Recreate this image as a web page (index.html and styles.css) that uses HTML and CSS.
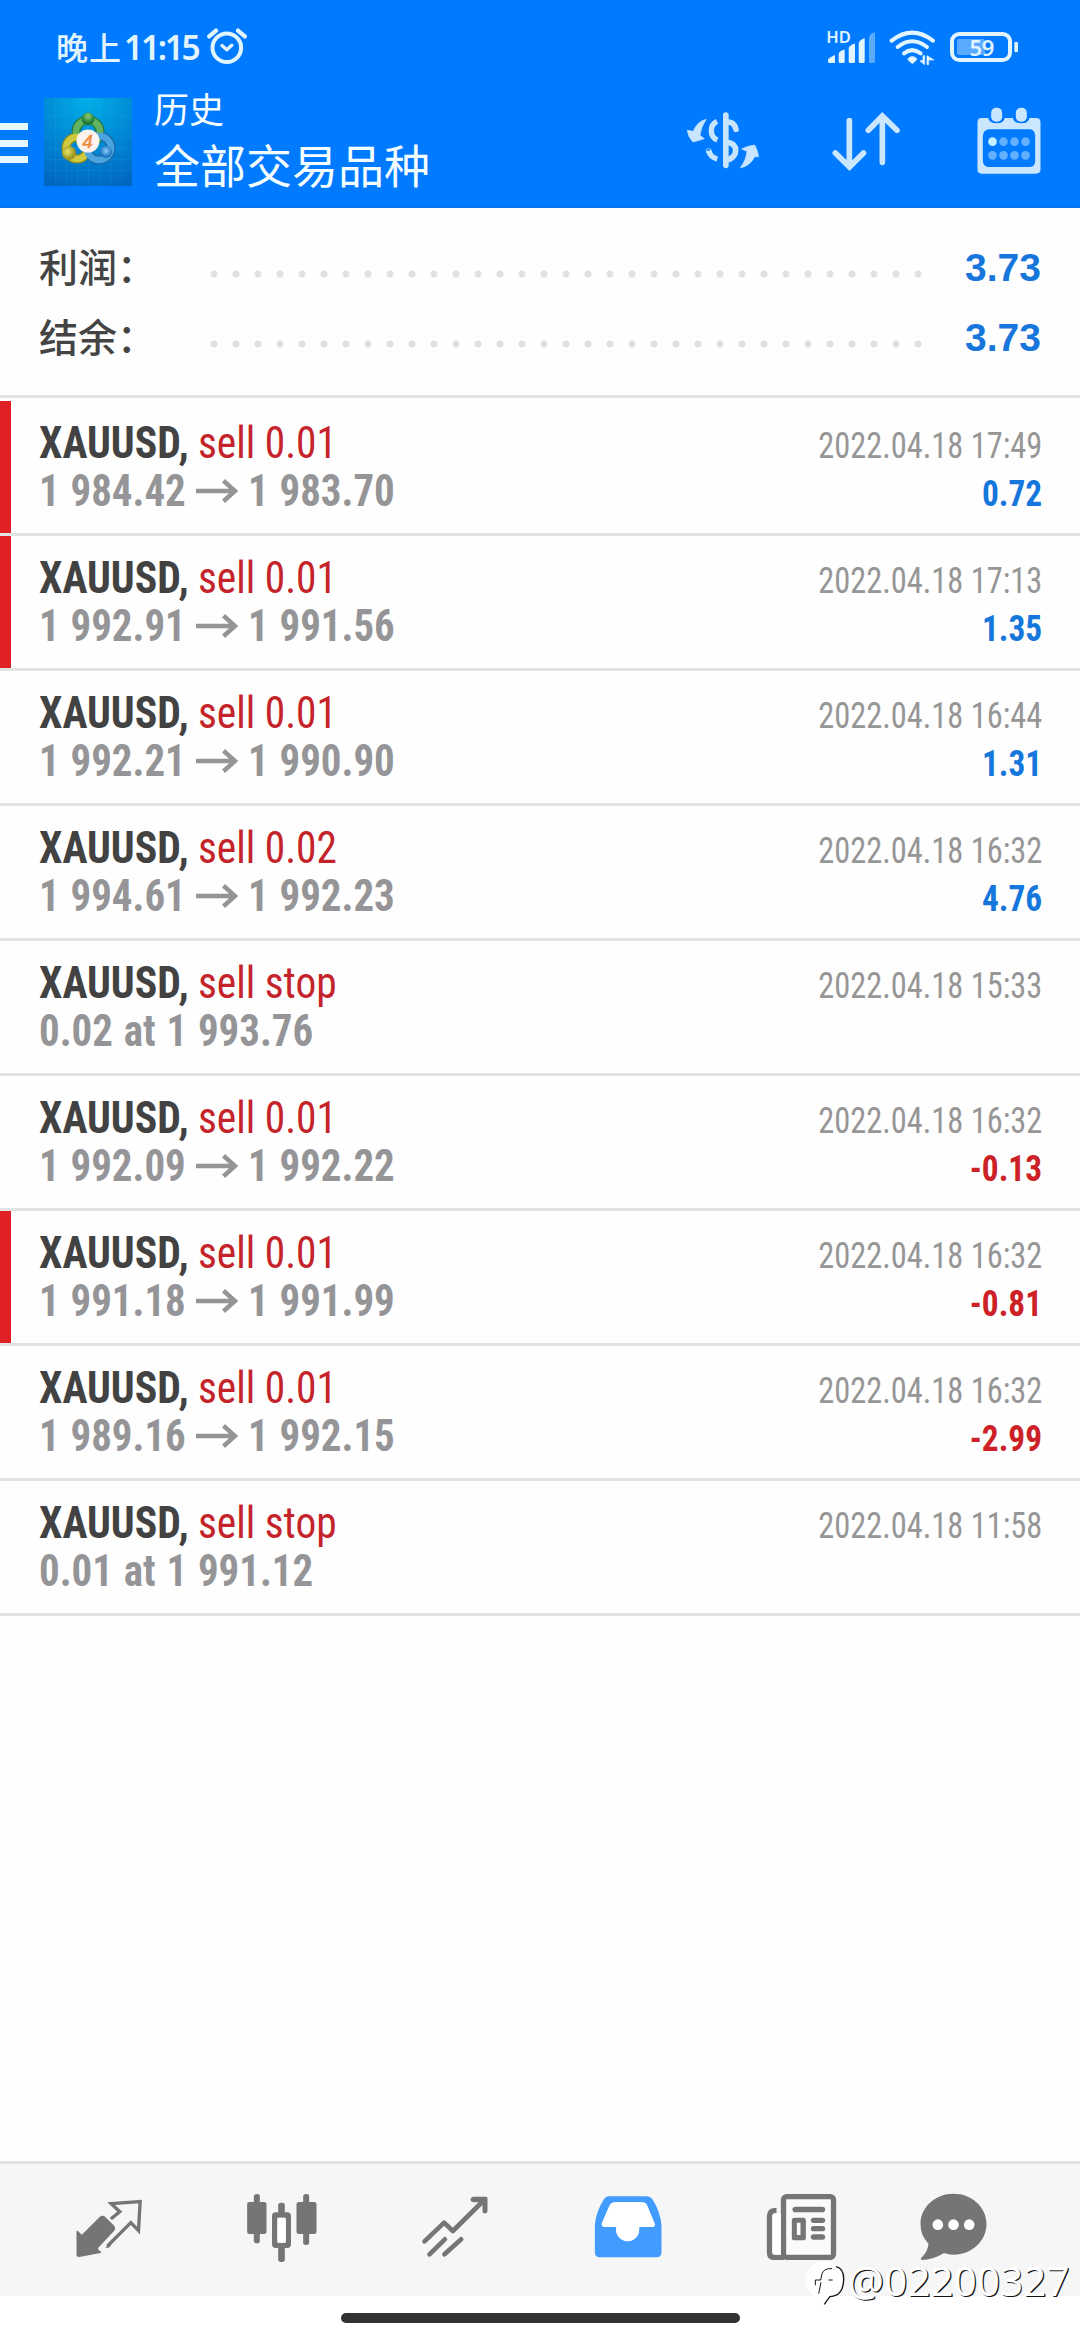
FILE: index.html
```html
<!DOCTYPE html>
<html lang="zh-CN">
<head>
<meta charset="utf-8">
<title>历史</title>
<link rel="stylesheet" href="styles.css">
</head>
<body>
<header class="header">
  <div class="status">
    <div class="status-left">
      <span class="clock-cjk">晚上</span><span class="clock">11:15</span>
      <svg class="alarm" viewBox="0 0 40 38"><g fill="none" stroke="#e2f5ff" stroke-linecap="round" stroke-linejoin="round"><circle cx="19.8" cy="20.8" r="14.3" stroke-width="4"/><path d="M2.2 9.4 9 3.6M31 3.6l6.800 5.800" stroke-width="4.200"/><path d="M15 18.500l4.800 4.200 5-4.500" stroke-width="3.400"/></g></svg>
    </div>
    <div class="status-right">
      <div class="signal"><span class="hd">HD</span>
        <svg class="bars" viewBox="0 0 50 34"><g fill="#e2f5ff"><path d="M2 29q0-2 7-5v8H3.500Q2 32 2 30.500z"/><path d="M12.700 22.500q1-3 6-4V30.500q0 1.500-1.500 1.500h-3q-1.500 0-1.500-1.500z"/><path d="M22.700 17q1-3 6.300-4.500V30.500q0 1.500-1.500 1.500h-3.300q-1.500 0-1.500-1.500z"/><path d="M32.700 12q1-3 6-5V30.500q0 1.500-1.500 1.500h-3q-1.500 0-1.500-1.500z"/><path opacity=".4" d="M43 6q1-3.500 6-5V30.500q0 1.500-1.500 1.500h-3Q43 32 43 30.500z"/></g></svg>
      </div>
      <svg class="wifi" viewBox="680 85 150 115"><g fill="none" stroke="#e2f5ff" stroke-width="12" stroke-linecap="round"><path d="M691 123Q752 75 815 123"/><path d="M709 142Q752 108 797 142"/><path d="M728 161Q752 142 778 161"/></g><path fill="#e2f5ff" d="M739 178q14-15 28 0-4 8-14 14-10-6-14-14zM776 184l14 11V168h-5v14zM797 168v27h5v-14h16z" stroke="#e2f5ff" stroke-width="2"/></svg>
      <svg class="battery" viewBox="864 90 212 102"><rect x="873" y="102" width="174" height="78" rx="22" fill="none" stroke="#e2f5ff" stroke-width="12"/><rect x="888" y="117" width="84" height="48" rx="6" fill="#e2f5ff" opacity=".4"/><rect x="1060" y="125" width="11" height="32" rx="5" fill="#e2f5ff"/><text x="962" y="167" text-anchor="middle" class="level">59</text></svg>
    </div>
  </div>
  <div class="appbar">
    <div class="menu"><i></i><i></i><i></i></div>
    <svg class="logo" viewBox="0 0 88 88">
      <defs>
        <radialGradient id="sky" cx=".5" cy="0" r="1.1"><stop offset="0" stop-color="#00b0e8"/><stop offset=".5" stop-color="#0088d4"/><stop offset="1" stop-color="#0064bc"/></radialGradient>
        <radialGradient id="gn" cx=".5" cy=".3"><stop offset="0" stop-color="#8fd07a"/><stop offset="1" stop-color="#1e7c34"/></radialGradient>
        <radialGradient id="ye" cx=".4" cy=".4"><stop offset="0" stop-color="#eee66a"/><stop offset="1" stop-color="#9c961f"/></radialGradient>
        <radialGradient id="bl" cx=".5" cy=".4"><stop offset="0" stop-color="#8fd0ff"/><stop offset="1" stop-color="#1874bd"/></radialGradient>
      </defs>
      <rect width="88" height="88" fill="url(#sky)"/>
      <path d="M11.500 0v88M22.500 0v88M33.500 0v88M44.500 0v88M55.500 0v88M66.500 0v88M77.500 0v88M0 17.500h88M0 28.500h88M0 39.500h88M0 50.500h88M0 61.500h88M0 72.500h88" stroke="#38b4ee" stroke-opacity=".14"/>
      <g fill="none" stroke-width="9"><circle cx="44" cy="34" r="12" stroke="#2a7a3c"/><circle cx="33" cy="50" r="11" stroke="#8d8c20"/><circle cx="55" cy="50" r="12" stroke="#1b68a8"/></g>
      <g fill="none" stroke-width="6.500"><circle cx="44" cy="34" r="12" stroke="#62b362"/><circle cx="33" cy="50" r="11" stroke="#d0c83e"/><circle cx="55" cy="50" r="12" stroke="#4ba3df"/></g>
      <circle cx="44" cy="21" r="6.500" fill="url(#gn)"/><circle cx="25" cy="55" r="7" fill="url(#ye)"/><circle cx="62" cy="54" r="6" fill="url(#bl)"/>
      <circle cx="44" cy="43" r="11.500" fill="#fbf3ee"/><text x="43.500" y="50" text-anchor="middle" class="four">4</text>
    </svg>
    <div class="titles"><div class="title">历史</div><div class="subtitle">全部交易品种</div></div>
    <div class="actions">
      <svg viewBox="6 0 240 240"><g fill="none" stroke="#c8e5ff"><path d="M134.500 45v151" stroke-width="17" stroke-linecap="round"/><path d="M108 64Q91 72 91 92T109 120" stroke-width="16"/><path d="M142 66Q160 67 165 88" stroke-width="17" stroke-linecap="round"/><path d="M83 152Q88 172 109 177" stroke-width="16" stroke-linecap="butt"/><circle cx="83" cy="153" r="1" stroke-width="15"/><path d="M140 127Q165 132 164 152T140 180" stroke-width="17"/></g><g fill="#c8e5ff" stroke="#c8e5ff" stroke-width="2"><path d="M76 58Q48 64 37 94L19 91Q21 111 36 126 53 122 70 116L57 106Q60 80 76 58z"/><path d="M178 203Q207 199 221 170L233 170Q230 150 221 135 198 138 182 147L198 154Q195 182 178 203z"/></g></svg>
      <svg viewBox="435 0 240 240"><g fill="none" stroke="#cbe6ff" stroke-width="17" stroke-linecap="round"><path d="M505 62V200M463 159l42.500 42 42-42M604 187V52M562 91l42-43 44 43"/></g></svg>
      <svg viewBox="925.5 300 240 240"><path fill="#cbe6ff" fill-rule="evenodd" d="M963 354h20q3 16 26 16 21 0 24-16h24q3 16 26 16 21 0 24-16h20q13 0 13 13V508q0 13-13 13H963q-12 0-12-13V367q0-13 12-13zM986 388q-17 0-19 20V480q0 20 17 21H1108q17-1 16-21V405q-2-17-18-17z"/><rect x="992" y="323" width="33" height="42" rx="15" fill="#cbe6ff"/><rect x="1066" y="323" width="33" height="42" rx="15" fill="#cbe6ff"/><circle cx="996" cy="425" r="13" fill="#c4f1ff"/><g fill="#62b0ff"><circle cx="1029" cy="425" r="13"/><circle cx="1062" cy="425" r="13"/><circle cx="1095" cy="425" r="13"/><circle cx="996" cy="466" r="13"/><circle cx="1029" cy="466" r="13"/><circle cx="1062" cy="466" r="13"/><circle cx="1095" cy="466" r="13"/></g></svg>
    </div>
  </div>
</header>
<section class="summary">
  <div class="sum-row"><span class="sum-label">利润：</span><span class="dots"></span><span class="sum-value">3.73</span></div>
  <div class="sum-row"><span class="sum-label">结余：</span><span class="dots"></span><span class="sum-value">3.73</span></div>
</section>
<main class="list">
  <article class="deal marked"><div class="line"><span class="symbol">XAUUSD,</span><span class="side">sell 0.01</span><time>2022.04.18 17:49</time></div><div class="line"><span class="price">1 984.42</span><svg class="arrow" viewBox="0 0 42 24"><path d="M0 12H38M27.500 1.800 39 12 27.500 22.200"/></svg><span class="price">1 983.70</span><span class="profit">0.72</span></div></article>
  <article class="deal marked"><div class="line"><span class="symbol">XAUUSD,</span><span class="side">sell 0.01</span><time>2022.04.18 17:13</time></div><div class="line"><span class="price">1 992.91</span><svg class="arrow" viewBox="0 0 42 24"><path d="M0 12H38M27.500 1.800 39 12 27.500 22.200"/></svg><span class="price">1 991.56</span><span class="profit">1.35</span></div></article>
  <article class="deal"><div class="line"><span class="symbol">XAUUSD,</span><span class="side">sell 0.01</span><time>2022.04.18 16:44</time></div><div class="line"><span class="price">1 992.21</span><svg class="arrow" viewBox="0 0 42 24"><path d="M0 12H38M27.500 1.800 39 12 27.500 22.200"/></svg><span class="price">1 990.90</span><span class="profit">1.31</span></div></article>
  <article class="deal"><div class="line"><span class="symbol">XAUUSD,</span><span class="side">sell 0.02</span><time>2022.04.18 16:32</time></div><div class="line"><span class="price">1 994.61</span><svg class="arrow" viewBox="0 0 42 24"><path d="M0 12H38M27.500 1.800 39 12 27.500 22.200"/></svg><span class="price">1 992.23</span><span class="profit">4.76</span></div></article>
  <article class="deal"><div class="line"><span class="symbol">XAUUSD,</span><span class="side">sell stop</span><time>2022.04.18 15:33</time></div><div class="line"><span class="price">0.02 at 1 993.76</span></div></article>
  <article class="deal"><div class="line"><span class="symbol">XAUUSD,</span><span class="side">sell 0.01</span><time>2022.04.18 16:32</time></div><div class="line"><span class="price">1 992.09</span><svg class="arrow" viewBox="0 0 42 24"><path d="M0 12H38M27.500 1.800 39 12 27.500 22.200"/></svg><span class="price">1 992.22</span><span class="profit loss">-0.13</span></div></article>
  <article class="deal marked"><div class="line"><span class="symbol">XAUUSD,</span><span class="side">sell 0.01</span><time>2022.04.18 16:32</time></div><div class="line"><span class="price">1 991.18</span><svg class="arrow" viewBox="0 0 42 24"><path d="M0 12H38M27.500 1.800 39 12 27.500 22.200"/></svg><span class="price">1 991.99</span><span class="profit loss">-0.81</span></div></article>
  <article class="deal"><div class="line"><span class="symbol">XAUUSD,</span><span class="side">sell 0.01</span><time>2022.04.18 16:32</time></div><div class="line"><span class="price">1 989.16</span><svg class="arrow" viewBox="0 0 42 24"><path d="M0 12H38M27.500 1.800 39 12 27.500 22.200"/></svg><span class="price">1 992.15</span><span class="profit loss">-2.99</span></div></article>
  <article class="deal"><div class="line"><span class="symbol">XAUUSD,</span><span class="side">sell stop</span><time>2022.04.18 11:58</time></div><div class="line"><span class="price">0.01 at 1 991.12</span></div></article>
</main>
<nav class="nav">
  <svg viewBox="25.5 24 240 240"><path fill="#757575" stroke="#757575" stroke-width="4" stroke-linejoin="round" d="M50 154L64 167 118 113Q126 106 134 113L158 137Q165 145 159 152L112 202Q109 207 112 210L120 217 56 229Q49 229 50 222z"/><path fill="none" stroke="#757575" stroke-width="10" d="M151 117L178 95 152 71 239 65 234 152 211 128 141 198"/><path d="M135 203l8-11 10 2-8 9z" fill="#757575"/></svg>
  <svg viewBox="544.5 24 240 240"><g fill="#757575"><rect x="580" y="42" width="18" height="148" rx="8"/><rect x="560" y="66" width="58" height="96" rx="7"/><rect x="728" y="42" width="18" height="153" rx="8"/><rect x="708" y="66" width="60" height="96" rx="7"/><rect x="653" y="68" width="20" height="35" rx="8"/><rect x="653" y="198" width="20" height="48" rx="8"/></g><rect x="642.500" y="105" width="41" height="91" rx="3" fill="none" stroke="#757575" stroke-width="16"/><rect x="651" y="113" width="25" height="75" rx="6" fill="#fff"/></svg>
  <svg viewBox="13.5 24 240 240"><g fill="none" stroke="#757575" stroke-width="14" stroke-linecap="round" stroke-linejoin="round"><path d="M42 184l59-56 26 25 88-87"/><path d="M57 223l46-45M102 223l50-45"/></g><path fill="#757575" d="M188 50h38q5 0 5 5v37q0 8-8 8-7 0-7-8V75l-8-8h-20q-8-1-8-8t8-9z"/></svg>
  <svg viewBox="532.5 24 240 240"><path fill="#429cff" fill-rule="evenodd" d="M594 49H710Q719 49 726 58 750 97 753 136V217Q753 232 738 232H568Q553 232 553 217V136Q556 97 580 58 586 49 594 49zM614 67Q603 67 597 77L574 130Q572 140 582 141H617V149A34.500 34.500 0 0 0 686 149V141H724Q736 141 732 130L710 77Q706 67 694 67z"/><path fill="#fff" d="M614 67Q603 67 597 77L574 130Q572 140 582 141H617V149A34.500 34.500 0 0 0 686 149V141H724Q736 141 732 130L710 77Q706 67 694 67z"/></svg>
  <svg viewBox="31.500 24 240 240"><g fill="none" stroke="#757575" stroke-width="16"><rect x="99" y="50" width="150" height="182" rx="9" fill="#fafafa"/><path d="M78 91Q57 91 57 108V218Q57 232 70 232H100"/></g><path fill="#fff" d="M66 108q0-8 10-8h15V224H76q-10 0-10-10z"/><g fill="#757575"><rect x="126" y="80" width="98" height="17" rx="8.500"/><rect x="181" y="113" width="43" height="16" rx="8"/><rect x="181" y="138" width="43" height="16" rx="8"/><rect x="181" y="163" width="43" height="16" rx="8"/><path fill-rule="evenodd" d="M132 113h26q8 0 8 8v52q0 8-8 8h-26q-8 0-8-8v-52q0-8 8-8zM139 128v37h11v-37z"/></g></svg>
  <svg viewBox="487.500 24 240 240"><path fill="#757575" d="M609 41C665 41 708 82 708 132S665 224 609 224Q594 224 581 219 548 239 514 240 508 237 514 232 533 212 534 191 510 167 510 132C510 82 553 41 609 41z"/><g fill="#fff"><circle cx="562" cy="134" r="16"/><circle cx="609" cy="134" r="16"/><circle cx="656" cy="134" r="16"/></g></svg>
</nav>
<footer class="gesture"><i></i></footer>
<div class="watermark">
  <svg viewBox="165 245 120 135"><circle cx="222" cy="302" r="56" fill="#fff"/><g fill="none" stroke="#151515" stroke-width="3"><path d="M196 318V302H212L216 283Q222 266 246 268M236 302H248M213 309L206 343"/><path d="M258 262Q283 268 281 303 280 333 262 346 248 352 240 352 232 362 223 375" stroke-width="4"/></g></svg><span>@02200327</span>
</div>
</body>
</html>
```
FILE: styles.css
```css
* { box-sizing: border-box; }
body {
  margin: 0;
  width: 1080px;
  height: 2340px;
  position: relative;
  display: flex;
  flex-direction: column;
  background: #fefefe;
  font-family: "Roboto Condensed", Roboto, "Noto Sans CJK SC", sans-serif;
  overflow: hidden;
}
svg { display: block; flex: none; }

.header { height: 208px; background: #007aff; border-bottom: 1px solid #1470d8; flex: none; color: #f4fdff; }
.status { height: 92px; padding: 0 60px 0 56px; display: flex; justify-content: space-between; align-items: flex-start; }
.status-left { display: flex; align-items: center; height: 94px; color: #e2f5ff; }
.clock-cjk { font: 500 32px/40px "Noto Sans CJK SC", sans-serif; letter-spacing: 1px; margin-top: -3px; }
.clock { font: 600 33.5px/40px "Noto Sans", sans-serif; letter-spacing: -2.3px; margin-left: 2px; }
.alarm { width: 40px; height: 38px; margin: 0 0 2px 9px; }
.status-right { display: flex; padding-top: 28px; }
.signal { position: relative; width: 62px; height: 36px; }
.hd { position: absolute; left: 0; top: 1px; font: 600 16.5px/16px "Noto Sans", sans-serif; color: #e2f5ff; }
.bars { position: absolute; left: 0; top: 3px; width: 50px; height: 34px; }
.wifi { width: 50px; height: 38.3px; }
.battery { width: 70.7px; height: 34px; margin: 2px 0 0 11px; }
.level { font: 600 66px "Noto Sans", sans-serif; fill: #e2f5ff; letter-spacing: -1px; }

.appbar { height: 115px; display: flex; align-items: flex-start; }
.menu { width: 28px; padding-top: 31px; display: flex; flex-direction: column; gap: 9.500px; }
.menu i { height: 7px; background: #e6f8ff; }
.logo { width: 88px; height: 88px; margin: 6px 0 0 16px; }
.four { font: italic 400 19px "Liberation Sans", sans-serif; fill: #f08a3c; stroke: #f08a3c; stroke-width: .5; }
.titles { margin: -4px 0 0 22px; font-family: "Noto Sans CJK SC", sans-serif; }
.title { font-size: 35px; line-height: 40px; }
.subtitle { font-size: 46px; line-height: 52px; margin-top: 9px; }
.actions { display: flex; gap: 63px; margin: 8px 31.5px 0 auto; }
.actions svg { width: 80px; height: 80px; }

.summary { height: 190px; padding: 25px 39px 0; border-bottom: 3px solid #e3e3e3; flex: none; }
.sum-row { height: 70px; display: flex; align-items: center; }
.sum-label { width: 163.500px; margin-top: -7px; font: 500 39px/56px "Noto Sans CJK SC", sans-serif; color: #444; }
.dots { width: 726px; height: 22px; margin-top: 12px; background: radial-gradient(circle, #e0e0e0 3px, transparent 4px) 0 0 / 22px 22px; }
.sum-value { margin-left: auto; font: 700 39px/56px "Liberation Sans", Arial, sans-serif; color: #1776dc; }

.list { padding-top: 3px; flex: 1; }
.deal { height: 135px; padding: 18px 38px 0 39px; border-bottom: 3px solid #e3e3e3; }
.marked { background: linear-gradient(#df2024, #df2024) 0 0 / 11px 132px no-repeat; }
.line { height: 48px; line-height: 48px; display: flex; align-items: baseline; white-space: pre; }
.symbol, .side, .price { font-size: 44px; transform-origin: left; }
.symbol { font-weight: 700; color: #424242; width: 159px; transform: scaleX(.95); }
.side { color: #c5232a; transform: scaleX(.94); }
.price { width: 157px; font-weight: 700; color: #959598; word-spacing: 1.5px; transform: scaleX(.93); }
.arrow { width: 42px; height: 24px; margin: 0 10px 0 0; align-self: center; }
.arrow path { fill: none; stroke: #959598; stroke-width: 4.500; }
.line time { margin-left: auto; font-size: 36.500px; color: #969696; transform: scaleX(.888); transform-origin: right; }
.profit { margin-left: auto; font-size: 36px; font-weight: 700; color: #1577dc; transform: scaleX(.925); transform-origin: right; }
.loss { color: #cd2128; }

.nav { height: 135px; flex: none; padding: 24px 0 0 22px; display: grid; grid-template-columns: repeat(5, 173px) 131px; justify-items: center; background: #f6f6f6; border-top: 3px solid #e1e1e1; }
.nav svg { width: 80px; height: 80px; }
.gesture { height: 44px; flex: none; padding-top: 17px; background: #fff; }
.gesture i { display: block; width: 399px; height: 10px; margin: 0 auto; border-radius: 5px; background: #323232; }
.watermark { position: absolute; left: 805px; top: 2261px; display: flex; align-items: flex-start; font: 400 40px/40px "Noto Sans", sans-serif; letter-spacing: .3px; color: #fff; text-shadow: 1.2px 1.2px 0 #111; }
.watermark svg { width: 40px; height: 45px; }
.watermark span { margin-left: 3px; }
```
